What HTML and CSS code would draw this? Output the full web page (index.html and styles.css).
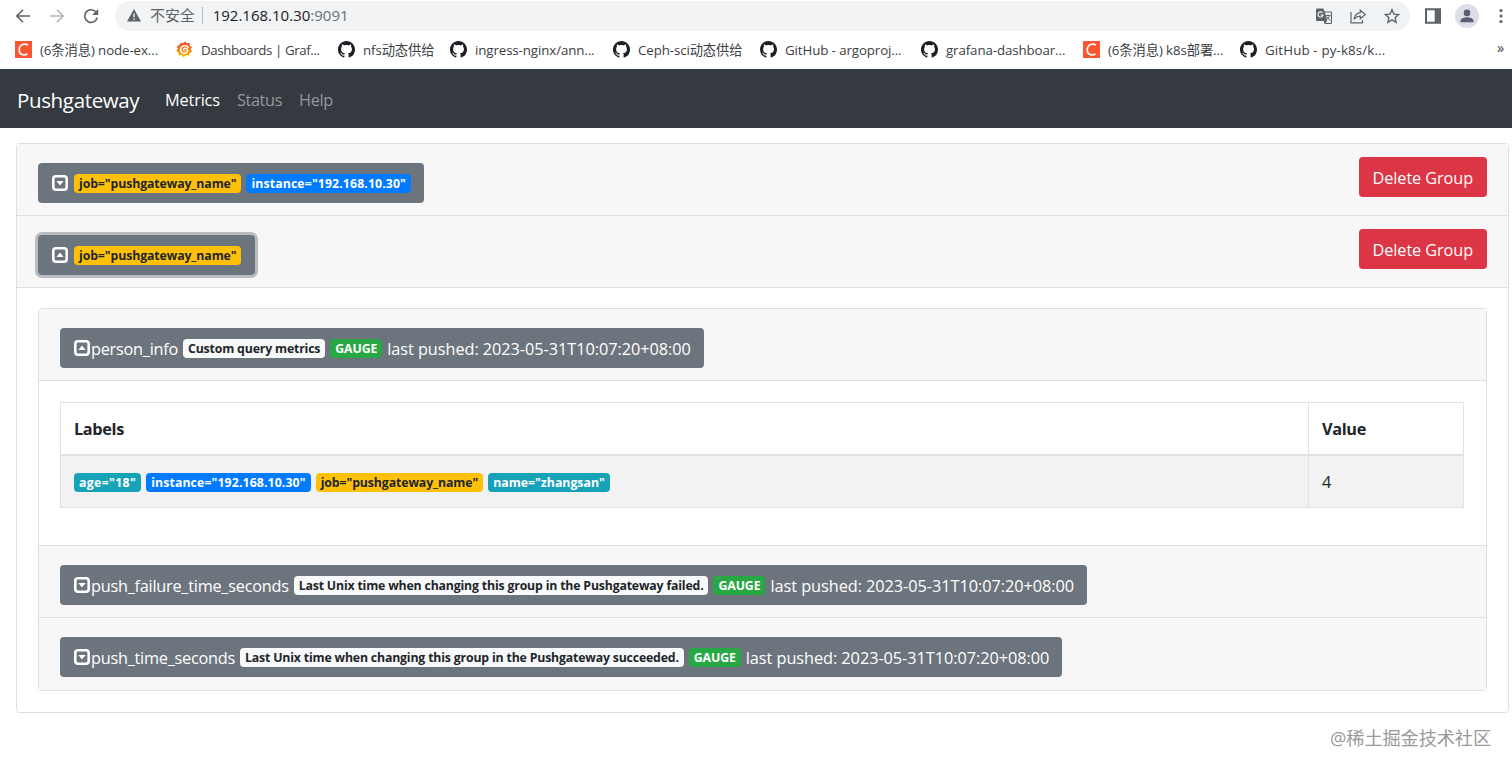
FILE: index.html
```html
<!DOCTYPE html>
<html lang="en">
<head>
    <meta charset="UTF-8">
    <meta name="viewport" content="width=device-width, initial-scale=1.0">
    <title>Prometheus Pushgateway</title>
    <link rel="stylesheet" href="styles.css">
</head>
<body>
    <svg class="sprite" aria-hidden="true">
        <symbol id="github" viewBox="0 0 16 16">
            <path d="M8 0C3.58 0 0 3.58 0 8c0 3.54 2.29 6.53 5.47 7.59.4.07.55-.17.55-.38 0-.19-.01-.82-.01-1.49-2.01.37-2.53-.49-2.69-.94-.09-.23-.48-.94-.82-1.13-.28-.15-.68-.52-.01-.53.63-.01 1.08.58 1.23.82.72 1.21 1.87.87 2.33.66.07-.52.28-.87.51-1.07-1.78-.2-3.64-.89-3.64-3.95 0-.87.31-1.59.82-2.15-.08-.2-.36-1.02.08-2.12 0 0 .67-.21 2.2.82.64-.18 1.32-.27 2-.27s1.36.09 2 .27c1.53-1.04 2.2-.82 2.2-.82.44 1.1.16 1.92.08 2.12.51.56.82 1.27.82 2.15 0 3.07-1.87 3.75-3.65 3.95.29.25.54.73.54 1.48 0 1.07-.01 1.93-.01 2.2 0 .21.15.46.55.38A8.01 8.01 0 0 0 16 8c0-4.42-3.58-8-8-8z"/>
        </symbol>
        <symbol id="csdn" viewBox="0 0 17 17">
            <path fill="#fc5531" d="M0 0h17v17H0z"/>
            <path fill="none" stroke="#fff" stroke-width="1.7" d="M13 4.1C11.9 3.4 10.8 3.2 9.6 3.2 6.4 3.2 4.2 5.4 4.2 8.8c0 3 1.8 5 4.9 5 1.3 0 2.3-.2 3.5-.8"/>
        </symbol>
        <symbol id="caret-down" viewBox="0 0 16 16">
            <rect x="1.3" y="1.3" width="13.4" height="13.4" rx="2.7" fill="none" stroke="#fff" stroke-width="2.6"/>
            <path fill="#fff" d="M4.4 6h7.2L8 10.5z"/>
        </symbol>
        <symbol id="caret-up" viewBox="0 0 16 16">
            <rect x="1.3" y="1.3" width="13.4" height="13.4" rx="2.7" fill="none" stroke="#fff" stroke-width="2.6"/>
            <path fill="#fff" d="M4.4 10h7.2L8 5.5z"/>
        </symbol>
    </svg>

    <div class="toolbar">
        <svg class="tool" viewBox="0 0 16 16"><path d="M15 8H2M8 1.8 1.8 8 8 14.2"/></svg>
        <svg class="tool forward" viewBox="0 0 16 16"><path d="M1 8h13M8 1.8 14.2 8 8 14.2"/></svg>
        <svg class="tool" viewBox="0 0 16 16"><path d="M13.3 4.6A6.3 6.3 0 1 0 14.2 9.5"/><path class="solid" d="M15.2 1v6H9.2z"/></svg>
        <div class="address">
            <svg class="warning" viewBox="0 0 14 13"><path d="M7 0 14 12.5H0z"/><path class="mark" d="M7 4.5v3.7M7 9.4v1.5"/></svg>
            <span class="insecure">不安全</span>
            <span class="url">192.168.10.30<span class="port">:9091</span></span>
            <div class="page-actions">
                <svg class="action" viewBox="0 0 16 16">
                    <path class="solid" d="M1 .5h6.3l1.3 3H15a1 1 0 0 1 1 1V15a1 1 0 0 1-1 1H8.6l-.9-3H1a1 1 0 0 1-1-1V1.5a1 1 0 0 1 1-1z"/>
                    <path fill="#f1f3f4" stroke="none" d="M9 4.5h5.9v10.4H9.4l1.8-2z"/>
                    <path stroke="#f1f3f4" stroke-width="1.2" d="M6.500 4.9A2.500 2.500 0 1 0 7 7H4.7"/>
                    <path stroke-width="1" d="M9.5 7.5h5M12 6.5v1M13.5 7.5c-.5 2-1.5 3.2-3 4.2M10.6 8.5c.7 1.5 1.9 2.6 3.5 3.5"/>
                </svg>
                <svg class="action" viewBox="0 0 16 16"><path stroke-width="1.2" d="M1 4v10.8h11.500V12M10.3 2.200 15.300 6.500l-5 4.300V8.200C7.300 8.200 5.500 9.300 4 11.500 4.500 7.600 6.500 5.200 10.300 4.700z"/></svg>
                <svg class="action" viewBox="0 0 16 16"><path stroke-width="1.4" d="m8 1.800 1.900 4.300 4.700.5-3.500 3.100 1 4.600L8 11.900l-4.100 2.400 1-4.600L1.400 6.600l4.700-.5z"/></svg>
            </div>
        </div>
        <svg class="panel" viewBox="0 0 16 16"><path d="M1 1.200h14v13.600H1z"/><path class="solid" d="M9.700 1H15v14H9.700z"/></svg>
        <svg class="avatar" viewBox="0 0 24 24"><circle cx="12" cy="12" r="12" fill="#dcdfe6"/><circle cx="12" cy="8.9" r="3.3"/><path d="M5.5 18.3v-1.4c0-2.5 4-3.6 6.5-3.6s6.5 1.1 6.5 3.6v1.4z"/></svg>
        <svg class="more" viewBox="0 0 4 16"><circle cx="2" cy="2.5" r="1.6"/><circle cx="2" cy="8" r="1.6"/><circle cx="2" cy="13.5" r="1.6"/></svg>
    </div>

    <div class="bookmarks">
        <a class="bookmark"><svg><use href="#csdn"/></svg>(6条消息) node-ex...</a>
        <a class="bookmark tight">
            <svg viewBox="0 0 18 18">
                <defs><linearGradient id="flame" x1="0" y1="0" x2="0" y2="1"><stop offset=".2" stop-color="#f05a28"/><stop offset="1" stop-color="#fbca0a"/></linearGradient></defs>
                <path fill="url(#flame)" d="m9.8.2 1.5 2.1 3.2-.2.2 2.8 2.3 1.5-1.3 2.4 1.3 2.9-2.7 1.2-.8 2.8-2.7-.5L8 17.3l-2-2.1-3 .1-.3-2.9L.2 10.3l1.6-2.2L1 5.2l2.8-.9.9-2.5 2.7.7z"/>
                <path fill="none" stroke="#fff" stroke-width="1.5" d="M13.3 7.1C12 4.8 9.1 4.3 7.1 5.5 4.6 6.9 4.3 10 6 11.9c1.6 1.7 4.5 1.6 5.7-.3 1-1.7.2-3.7-1.5-4-1.2-.2-2.2.5-2.2 1.5 0 .8.6 1.3 1.3 1.2"/>
            </svg>Dashboards | Graf...
        </a>
        <a class="bookmark"><svg><use href="#github"/></svg>nfs动态供给</a>
        <a class="bookmark"><svg><use href="#github"/></svg>ingress-nginx/ann...</a>
        <a class="bookmark"><svg><use href="#github"/></svg>Ceph-sci动态供给</a>
        <a class="bookmark"><svg><use href="#github"/></svg>GitHub - argoproj...</a>
        <a class="bookmark"><svg><use href="#github"/></svg>grafana-dashboar...</a>
        <a class="bookmark"><svg><use href="#csdn"/></svg>(6条消息) k8s部署...</a>
        <a class="bookmark loose"><svg><use href="#github"/></svg>GitHub - py-k8s/k...</a>
        <span class="overflow">»</span>
    </div>

    <nav class="navbar">
        <a class="navbar-brand">Pushgateway</a>
        <a class="nav-link active">Metrics</a>
        <a class="nav-link">Status</a>
        <a class="nav-link">Help</a>
    </nav>

    <div class="accordion">
        <div class="card-header">
            <button class="btn btn-group">
                <svg class="caret"><use href="#caret-down"/></svg>
                <span class="badge warn">job="pushgateway_name"</span>
                <span class="badge primary">instance="192.168.10.30"</span>
            </button>
            <button class="btn btn-danger">Delete Group</button>
        </div>
        <div class="card-header">
            <button class="btn btn-group focus">
                <svg class="caret"><use href="#caret-up"/></svg>
                <span class="badge warn">job="pushgateway_name"</span>
            </button>
            <button class="btn btn-danger">Delete Group</button>
        </div>

        <div class="card-body">
            <div class="accordion inner">
                <div class="card-header">
                    <button class="btn">
                        <svg class="caret"><use href="#caret-up"/></svg>
                        <span class="metric">person_info</span>
                        <span class="badge light">Custom query metrics</span>
                        <span class="badge success">GAUGE</span>
                        <span class="pushed">last pushed: 2023-05-31T10:07:20+08:00</span>
                    </button>
                </div>
                <div class="metric-body">
                    <table class="table">
                        <thead>
                            <tr><th>Labels</th><th class="value">Value</th></tr>
                        </thead>
                        <tbody>
                            <tr>
                                <td>
                                    <div class="labels">
                                        <span class="badge info">age="18"</span>
                                        <span class="badge primary">instance="192.168.10.30"</span>
                                        <span class="badge warn">job="pushgateway_name"</span>
                                        <span class="badge info">name="zhangsan"</span>
                                    </div>
                                </td>
                                <td>4</td>
                            </tr>
                        </tbody>
                    </table>
                </div>
                <div class="card-header">
                    <button class="btn">
                        <svg class="caret"><use href="#caret-down"/></svg>
                        <span class="metric">push_failure_time_seconds</span>
                        <span class="badge light">Last Unix time when changing this group in the Pushgateway failed.</span>
                        <span class="badge success">GAUGE</span>
                        <span class="pushed">last pushed: 2023-05-31T10:07:20+08:00</span>
                    </button>
                </div>
                <div class="card-header">
                    <button class="btn">
                        <svg class="caret"><use href="#caret-down"/></svg>
                        <span class="metric">push_time_seconds</span>
                        <span class="badge light">Last Unix time when changing this group in the Pushgateway succeeded.</span>
                        <span class="badge success">GAUGE</span>
                        <span class="pushed">last pushed: 2023-05-31T10:07:20+08:00</span>
                    </button>
                </div>
            </div>
        </div>
    </div>

    <footer class="watermark">@稀土掘金技术社区</footer>
</body>
</html>
```
FILE: styles.css
```css
* {
    box-sizing: border-box;
}
body {
    margin: 0;
    height: 770px;
    overflow: hidden;
    background: #fff;
    color: #212529;
    font-family: "Open Sans", "Noto Sans CJK SC", sans-serif;
    font-size: 16.3px;
    line-height: 24px;
    letter-spacing: -0.1px;
}
.sprite {
    display: none;
}

/* browser toolbar */
.toolbar {
    display: flex;
    align-items: center;
    height: 31px;
    padding-left: 15px;
}
.toolbar svg {
    flex: none;
}
.tool {
    width: 16px;
    height: 16px;
    margin-right: 18px;
    fill: none;
    stroke: #5f6368;
    stroke-width: 1.6;
}
.tool.forward {
    stroke: #b4b6b9;
}
.tool .solid,
.action .solid,
.panel .solid {
    fill: #5f6368;
    stroke: none;
}
.address {
    display: flex;
    align-items: center;
    width: 1295px;
    height: 30px;
    margin-left: -2px;
    padding: 0 10px 0 12px;
    border-radius: 15px;
    background: #f1f3f4;
    font-size: 15px;
}
.warning {
    width: 14px;
    height: 13px;
    fill: #5f6368;
}
.warning .mark {
    stroke: #f1f3f4;
    stroke-width: 1.4;
}
.insecure {
    margin-left: 9px;
    padding-right: 7px;
    border-right: 1px solid #b5b8bc;
    color: #5f6368;
    line-height: 17px;
}
.url {
    margin-left: 10px;
    padding-bottom: 2px;
    color: #202124;
    letter-spacing: 0;
}
.port {
    color: #6b6f74;
}
.page-actions {
    display: flex;
    gap: 18px;
    margin-left: auto;
}
.action {
    width: 16px;
    height: 16px;
    fill: none;
    stroke: #5f6368;
}
.panel {
    width: 16px;
    height: 16px;
    margin-left: 15px;
    fill: none;
    stroke: #5f6368;
    stroke-width: 2;
}
.avatar {
    width: 24px;
    height: 24px;
    margin-left: 14px;
    fill: #5a6072;
}
.more {
    width: 4px;
    height: 16px;
    margin-left: 20px;
    fill: #5f6368;
}

/* bookmarks */
.bookmarks {
    display: grid;
    grid-template-columns: 161px 162px 112px 163px 147px 161px 162px 157px 1fr auto;
    align-items: center;
    height: 37px;
    margin-bottom: 1px;
    padding: 0 8px 0 15px;
    color: #3c4043;
    font-size: 13.3px;
}
.bookmark {
    display: flex;
    align-items: center;
    gap: 8px;
    white-space: nowrap;
}
.bookmark.tight {
    letter-spacing: -0.4px;
}
.bookmark.loose {
    letter-spacing: 0.15px;
}
.bookmark svg {
    flex: none;
    width: 17px;
    height: 17px;
    fill: #1b1f23;
}
.overflow {
    padding-bottom: 3px;
    font-size: 14.5px;
}

/* navbar */
.navbar {
    display: flex;
    align-items: center;
    height: 59px;
    padding: 3px 17px 0;
    background: #343a40;
}
.navbar-brand {
    width: 148px;
    color: #fff;
    font-size: 20.5px;
    letter-spacing: -0.35px;
}
.nav-link {
    margin-right: 17px;
    color: #94979b;
    letter-spacing: -0.35px;
}
.nav-link.active {
    color: #fff;
    letter-spacing: -0.15px;
}

/* groups */
.accordion {
    margin: 15px 3px 0 16px;
    border: 1px solid #dfdfdf;
    border-radius: 4px;
}
.accordion.inner {
    margin: 0;
}
.card-header {
    display: flex;
    align-items: flex-start;
    justify-content: space-between;
    height: 72px;
    padding: 19px 21px 0;
    border-bottom: 1px solid #dfdfdf;
    background: #f7f7f7;
}
.inner .card-header:last-child {
    border-bottom: 0;
}
.card-body {
    padding: 20px 21px 21px;
}
.btn {
    display: flex;
    align-items: center;
    height: 40px;
    padding: 2px 13px 1px 14px;
    border: 0;
    border-radius: 4px;
    background: #6c757d;
    color: #fff;
    font: inherit;
    letter-spacing: inherit;
    white-space: nowrap;
}
.btn.focus {
    padding-right: 14px;
    box-shadow: 0 0 0 3px #b9bdc1;
}
.btn-danger {
    margin-top: -6px;
    padding: 2px 14px 0;
    background: #dc3545;
}
.caret {
    width: 16px;
    height: 16px;
    margin: -2px 1px 0 0;
}
.btn-group .caret {
    margin-right: 6px;
}
.metric {
    margin-right: 5px;
    letter-spacing: -0.25px;
}
.pushed {
    letter-spacing: -0.05px;
}
.badge {
    height: 19px;
    margin-right: 5px;
    padding: 0 5px;
    border-radius: 4px;
    font-size: 12.3px;
    font-weight: 700;
    line-height: 20px;
    letter-spacing: -0.1px;
    color: #fff;
}
.btn-group .badge:last-child {
    margin-right: 0;
}
.warn {
    background: #ffc107;
    color: #212529;
}
.primary {
    background: #007bff;
    letter-spacing: 0.11px;
}
.info {
    background: #17a2b8;
    letter-spacing: 0;
}
.info:first-child {
    letter-spacing: 0.35px;
}
.success {
    background: #28a745;
}
.light {
    background: #f8f9fa;
    color: #212529;
    letter-spacing: -0.17px;
}

/* metric table */
.metric-body {
    height: 165px;
    padding: 21px 21px 0;
    border-bottom: 1px solid #dfdfdf;
}
.table {
    width: 1404px;
    border-collapse: collapse;
    table-layout: fixed;
}
.table th,
.table td {
    height: 52px;
    padding: 1px 13px 0;
    border: 1px solid #dee2e6;
    text-align: left;
}
.table th {
    border-bottom-width: 2px;
    font-weight: 700;
    letter-spacing: -0.35px;
}
.table td {
    height: 53px;
}
.table .value {
    width: 155px;
}
.table tbody tr {
    background: #f2f2f2;
}
.labels {
    display: flex;
    padding-top: 1px;
}

.watermark {
    margin: 13px 21px 0;
    color: #999;
    font-size: 18.2px;
    text-align: right;
}
```
